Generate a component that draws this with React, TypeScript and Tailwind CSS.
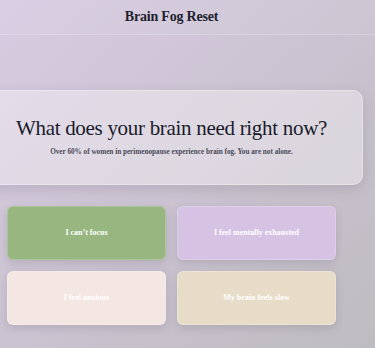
import React from "react";

const serif = { fontFamily: '"Liberation Serif", "Times New Roman", serif' };

export default function App() {
  const cards = [
    { label: "I can\u2019t focus", cls: "bg-[#97b680]" },
    { label: "I feel mentally exhausted", cls: "bg-[#d6c3e3]" },
    { label: "I feel anxious", cls: "bg-[#f4e6e3]" },
    { label: "My brain feels slow", cls: "bg-[#e7dcc8]" },
  ];
  return (
    <div
      className="w-[375px] h-[348px] overflow-hidden bg-gradient-to-br from-[#d8cbe2] via-[#cbc3d1] to-[#bfbcc1]"
      style={serif}
    >
      <header className="h-[35px] border-b border-white/20 bg-white/5 flex items-center">
        <div className="w-[343px] flex justify-center">
          <h1 className="text-[14px] font-bold text-[#1e1f2e] tracking-[-0.2px] leading-none" style={serif}>
            Brain Fog Reset
          </h1>
        </div>
      </header>
      <div className="w-[343px] pt-[55px]">
        <section className="-mx-[20px] h-[95px] rounded-[10px] bg-white/35 shadow-[0_4px_14px_rgba(80,70,90,0.18)] border border-white/30 flex flex-col items-center justify-center">
          <h2 className="text-[21px] text-[#1a1b2b] leading-none tracking-[-0.3px]" style={serif}>
            What does your brain need right now?
          </h2>
          <p className="mt-[10px] text-[7.2px] font-semibold text-[#4a4a58] leading-none" style={serif}>
            Over 60% of women in perimenopause experience brain fog. You are not alone.
          </p>
        </section>
        <div className="grid grid-cols-2 gap-x-[11px] gap-y-[11px] px-[7px] mt-[21px]">
          {cards.map((c) => (
            <div
              key={c.label}
              className={`${c.cls} h-[54px] rounded-[6px] shadow-[0_3px_8px_rgba(80,70,90,0.18)] border border-white/20 flex items-center justify-center`}
            >
              <span className="text-white text-[8px] font-bold leading-none" style={serif}>{c.label}</span>
            </div>
          ))}
        </div>
      </div>
    </div>
  );
}
